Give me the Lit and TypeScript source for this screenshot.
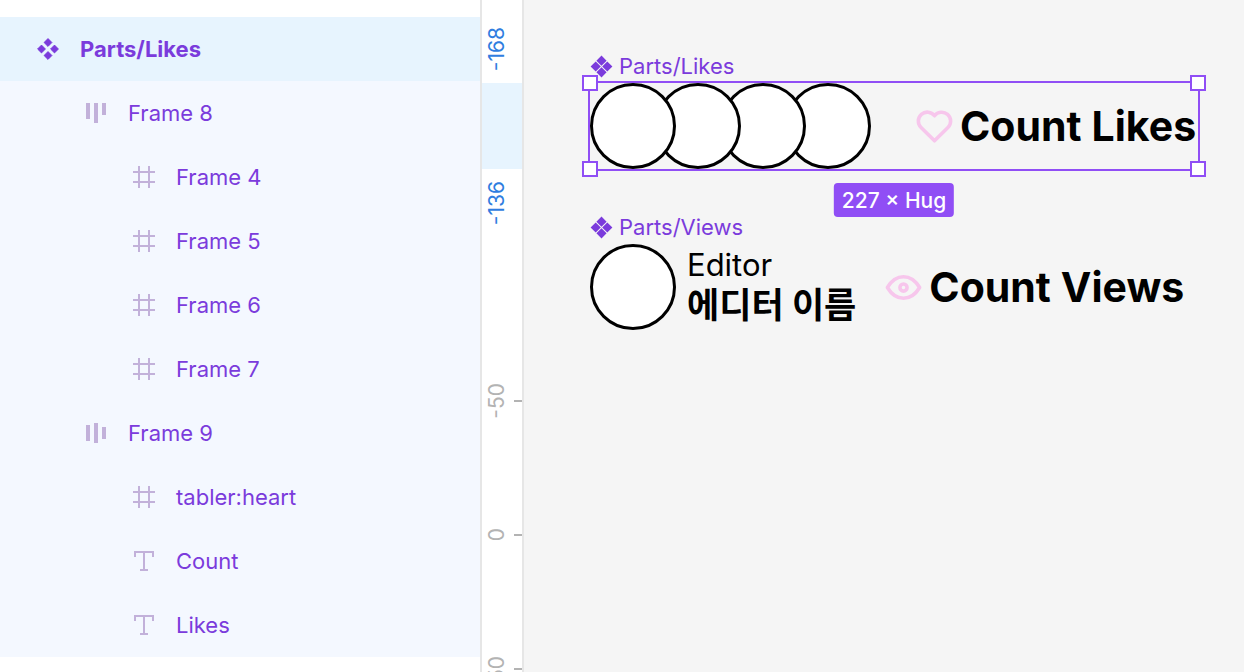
import { LitElement, html, css, svg, nothing } from "lit";
import { customElement, property } from "lit/decorators.js";

type IconName = "component" | "row-top" | "row-center" | "frame" | "text";

interface Layer {
  name: string;
  icon: IconName;
  depth: number;
  selected?: boolean;
}

const LAYERS: Layer[] = [
  { name: "Parts/Likes", icon: "component", depth: 0, selected: true },
  { name: "Frame 8", icon: "row-top", depth: 1 },
  { name: "Frame 4", icon: "frame", depth: 2 },
  { name: "Frame 5", icon: "frame", depth: 2 },
  { name: "Frame 6", icon: "frame", depth: 2 },
  { name: "Frame 7", icon: "frame", depth: 2 },
  { name: "Frame 9", icon: "row-center", depth: 1 },
  { name: "tabler:heart", icon: "frame", depth: 2 },
  { name: "Count", icon: "text", depth: 2 },
  { name: "Likes", icon: "text", depth: 2 },
];

// Layer glyphs share a 32 by 32 box.
const GLYPHS = {
  component: svg`<path stroke="currentColor" stroke-width="1" stroke-linejoin="round"
    d="M16 5.6l3.9 3.9-3.9 3.9-3.9-3.9zM16 18.6l3.9 3.9-3.9 3.9-3.9-3.9zM9.5 12.1l3.9 3.9-3.9 3.9-3.9-3.9zM22.5 12.1l3.9 3.9-3.9 3.9-3.9-3.9z"/>`,
  "row-top": svg`<path d="M6 6h4v16H6zM14 6h4v20h-4zM22 6h4v12h-4z"/>`,
  "row-center": svg`<path d="M6 8h4v16H6zM14 6h4v20h-4zM22 10h4v12h-4z"/>`,
  frame: svg`<path d="M10 5h2v5h8V5h2v5h5v2h-5v8h5v2h-5v5h-2v-5h-8v5h-2v-5H5v-2h5v-8H5v-2h5zM12 12v8h8v-8z" fill-rule="evenodd"/>`,
  text: svg`<path d="M6 6h20v6h-2V8h-7v16h3v2h-8v-2h3V8H8v4H6z"/>`,
};

@customElement("layer-panel")
class LayerPanel extends LitElement {
  static styles = css`
    :host { display: block; background: #fff; padding-top: 17px; box-sizing: border-box; }
    .list { list-style: none; margin: 0; padding: 0; background: #f4f8ff; }
    .row {
      display: flex; align-items: center; gap: 16px;
      width: 100%; height: 64px; padding: 0 16px 0 32px;
      border: 0; background: transparent; color: #7b3bdc;
      font: 400 22px/32px Inter, sans-serif; text-align: left;
    }
    .depth-1 { padding-left: 80px; }
    .depth-2 { padding-left: 128px; }
    .selected { background: #e7f4fe; font-weight: 700; }
    .icon { width: 32px; height: 32px; flex: none; fill: currentColor; color: #c2b1da; }
    .selected .icon { color: #7b3bdc; }
  `;

  render() {
    return html`<ul class="list">
      ${LAYERS.map(
        (l) => html`<li>
          <button class="row depth-${l.depth} ${l.selected ? "selected" : ""}">
            <svg class="icon" viewBox="0 0 32 32" aria-hidden="true">${GLYPHS[l.icon]}</svg>
            <span>${l.name}</span>
          </button>
        </li>`
      )}
    </ul>`;
  }
}

@customElement("side-ruler")
class SideRuler extends LitElement {
  static styles = css`
    :host {
      display: flex; flex-direction: column; overflow: hidden; background: #fff;
      border: solid #e6e6e6; border-width: 0 2px; box-sizing: border-box;
      font: 400 21px/24px Inter, sans-serif; color: #b3b3b3;
    }
    .label { writing-mode: vertical-rl; transform: rotate(180deg); }
    .edge { display: flex; flex: none; padding: 12px 0 12px 3px; box-sizing: border-box; color: #2f7de0; }
    .start { height: 83px; align-items: flex-end; }
    .end { height: 165px; align-items: flex-start; }
    .range { flex: none; height: 86px; background: #e7f4fe; }
    .step {
      display: flex; flex: none; align-items: center; justify-content: space-between;
      height: 134px; padding-left: 3px;
    }
    .tick { width: 8px; height: 2px; background: #b3b3b3; }
  `;

  render() {
    return html`
      <div class="edge start"><span class="label">-168</span></div>
      <div class="range"></div>
      <div class="edge end"><span class="label">-136</span></div>
      ${[-50, 0, 50].map(
        (n) => html`<div class="step"><span class="label">${n}</span><span class="tick"></span></div>`
      )}
    `;
  }
}

@customElement("component-node")
class ComponentNode extends LitElement {
  @property() name = "";
  @property() size = "";

  static styles = css`
    :host { display: block; width: max-content; }
    .title {
      display: flex; align-items: center; gap: 6px; height: 32px; margin-bottom: 1px;
      font: 400 22px/32px Inter, sans-serif; color: #7b3bdc;
    }
    .mark { width: 23px; height: 23px; fill: currentColor; }
    .body { position: relative; }
    .selection { position: absolute; inset: -2px; border: 2px solid #904ef5; pointer-events: none; z-index: 5; }
    .handle {
      position: absolute; width: 16px; height: 16px; box-sizing: border-box;
      border: 2px solid #904ef5; background: #fff;
    }
    .nw { top: -8px; left: -8px; }
    .ne { top: -8px; right: -8px; }
    .sw { bottom: -8px; left: -8px; }
    .se { bottom: -8px; right: -8px; }
    .badge {
      position: absolute; top: 100%; left: 50%; transform: translateX(-50%);
      margin-top: 14px; padding: 2px 8px 0; border-radius: 4px; background: #904ef5; color: #fff;
      font: 500 21px/32px Inter, sans-serif; white-space: nowrap;
    }
  `;

  render() {
    return html`
      <div class="title">
        <svg class="mark" viewBox="0 0 23 23" aria-hidden="true">
          <path d="M11.5.6l5.1 5.1-5.1 5.1-5.1-5.1zM11.5 12.2l5.1 5.1-5.1 5.1-5.1-5.1zM5.7 6.4l5.1 5.1-5.1 5.1-5.1-5.1zM17.3 6.4l5.1 5.1-5.1 5.1-5.1-5.1z"/>
        </svg>
        <span>${this.name}</span>
      </div>
      <div class="body">
        <slot></slot>
        ${this.size
          ? html`<div class="selection">
                <span class="handle nw"></span><span class="handle ne"></span>
                <span class="handle sw"></span><span class="handle se"></span>
              </div>
              <span class="badge">${this.size}</span>`
          : nothing}
      </div>
    `;
  }
}

@customElement("app-root")
class AppRoot extends LitElement {
  static styles = css`
    :host {
      display: grid; grid-template-columns: 480px 44px minmax(0, 1fr);
      height: 100vh; overflow: hidden; background: #f5f5f5; color: #000;
      font-family: Inter, "Noto Sans CJK KR", sans-serif;
    }
    .canvas { display: flex; flex-direction: column; gap: 42px; padding: 50px 0 0 66px; overflow: hidden; }
    .frame { display: flex; align-items: center; height: 86px; }
    .likes { gap: 42px; padding-right: 2px; }
    .views { gap: 26px; }
    .avatars { display: flex; isolation: isolate; }
    .avatar {
      width: 86px; height: 86px; box-sizing: border-box; flex: none;
      border: 3px solid #000; border-radius: 50%; background: #fff;
    }
    .avatars .avatar { z-index: 1; }
    .avatars .avatar:nth-child(1) { z-index: 4; }
    .avatars .avatar:nth-child(2) { z-index: 3; }
    .avatars .avatar:nth-child(3) { z-index: 2; }
    .avatars .avatar + .avatar { margin-left: -21px; }
    .stat {
      display: flex; align-items: center; gap: 4px;
      font-size: 41px; line-height: 52px; font-weight: 700;
    }
    .words { display: flex; gap: 10px; }
    .icon {
      width: 43px; height: 43px; fill: none; stroke: #f7c6ec; stroke-width: 2;
      stroke-linecap: round; stroke-linejoin: round;
    }
    .editor { display: flex; align-items: center; gap: 11px; }
    .who { display: flex; flex-direction: column; padding-bottom: 4px; font-size: 31px; line-height: 41px; }
    .name { font-size: 35px; font-weight: 700; }
  `;

  render() {
    return html`
      <layer-panel></layer-panel>
      <side-ruler></side-ruler>
      <main class="canvas">
        <component-node name="Parts/Likes" size="227 × Hug">
          <div class="frame likes">
            <div class="avatars">${[4, 5, 6, 7].map(() => html`<span class="avatar"></span>`)}</div>
            <div class="stat">
              <svg class="icon" viewBox="0 0 24 24" aria-hidden="true">
                <path d="M19.5 12.572L12 20l-7.5-7.428A5 5 0 1 1 12 6.006a5 5 0 1 1 7.5 6.572"/>
              </svg>
              <span class="words"><span>Count</span><span>Likes</span></span>
            </div>
          </div>
        </component-node>
        <component-node name="Parts/Views">
          <div class="frame views">
            <div class="editor">
              <span class="avatar"></span>
              <div class="who"><span>Editor</span><span class="name">에디터 이름</span></div>
            </div>
            <div class="stat">
              <svg class="icon" viewBox="0 0 24 24" aria-hidden="true">
                <circle cx="12" cy="12" r="2"/>
                <path d="M21 12c-2.4 4-5.4 6-9 6s-6.6-2-9-6c2.4-4 5.4-6 9-6s6.6 2 9 6"/>
              </svg>
              <span class="words"><span>Count</span><span>Views</span></span>
            </div>
          </div>
        </component-node>
      </main>
    `;
  }
}
